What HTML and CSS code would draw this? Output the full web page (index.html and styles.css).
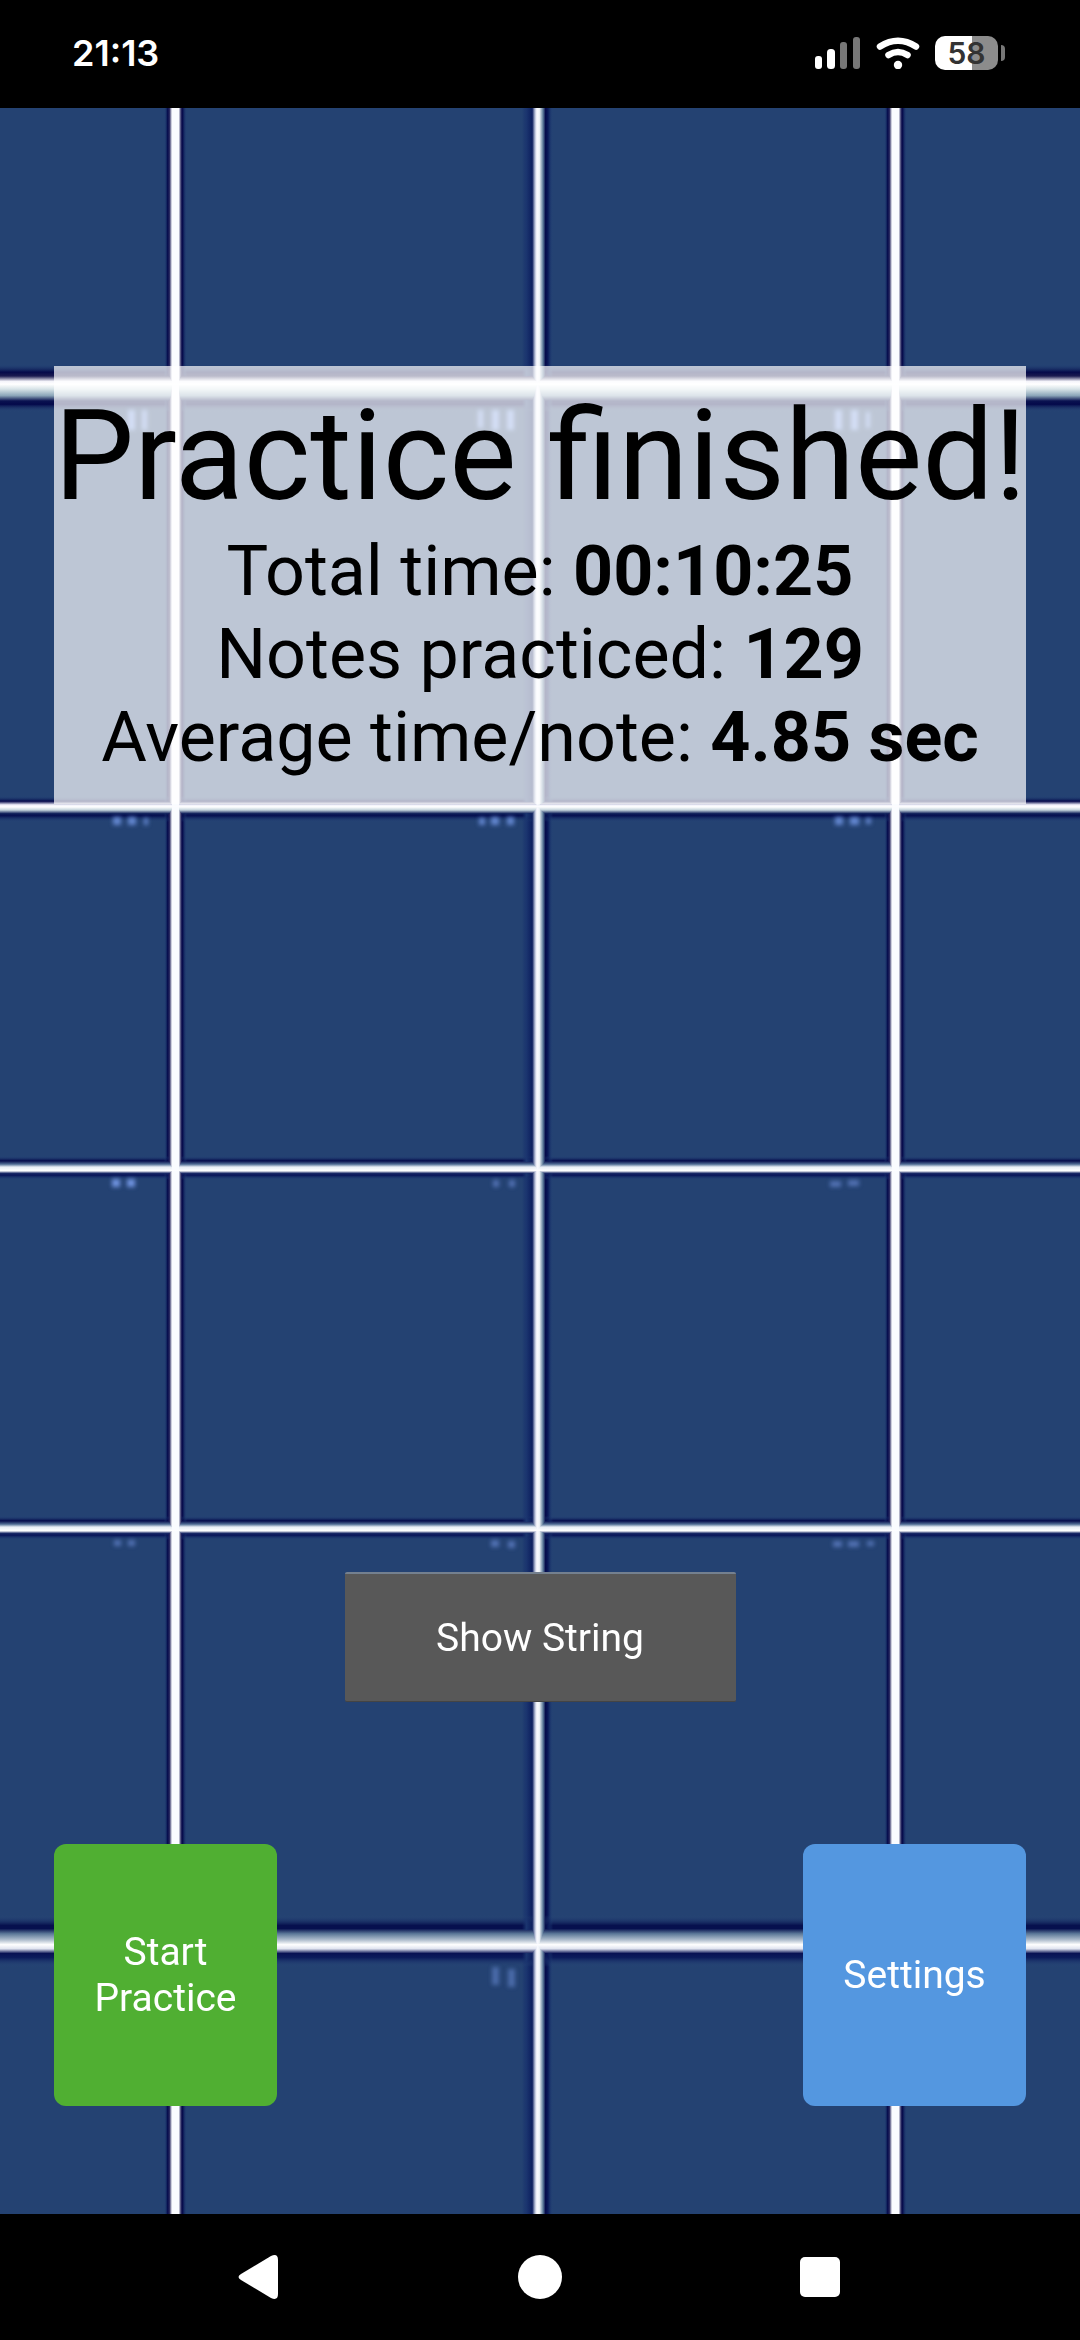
FILE: index.html
```html
<!DOCTYPE html>
<html lang="en">
<head>
<meta charset="utf-8">
<meta name="viewport" content="width=device-width, initial-scale=1">
<title>Practice finished</title>
<link rel="stylesheet" href="styles.css">
</head>
<body>
<header class="status">
  <time class="clock">21:13</time>
  <div class="indicators">
    <svg class="signal" viewBox="0 0 46 32" aria-hidden="true">
      <rect x="0" y="19" width="7" height="13" rx="3" fill="#fff"/>
      <rect x="12" y="12" width="8" height="20" rx="3.5" fill="#fff"/>
      <rect x="25" y="5" width="7" height="27" rx="3" fill="#777"/>
      <rect x="38" y="0" width="7" height="32" rx="3" fill="#777"/>
    </svg>
    <svg class="wifi" viewBox="0 0 44 32" aria-hidden="true" fill="none" stroke="#fff" stroke-width="6.5" stroke-linecap="round">
      <path d="M4 9.5Q22-2 40 9.5"/>
      <path d="M12.5 18Q22 12 31.500 18"/>
      <circle cx="22" cy="28" r="4.200" fill="#fff" stroke="none"/>
    </svg>
    <span class="battery"><span class="level">58</span><span class="tip"></span></span>
  </div>
</header>

<main class="stage">
  <svg class="board" viewBox="0 108 1080 2106" preserveAspectRatio="none" aria-hidden="true">
    <defs>
      <linearGradient id="edge">
        <stop offset="0" stop-color="#24457a" stop-opacity="0"/>
        <stop offset=".16" stop-color="#04094a"/>
        <stop offset=".24" stop-color="#2a2a60"/>
        <stop offset=".35" stop-color="#fafcff"/>
        <stop offset=".64" stop-color="#fafcff"/>
        <stop offset=".74" stop-color="#2a2a60"/>
        <stop offset=".81" stop-color="#04094a"/>
        <stop offset="1" stop-color="#24457a" stop-opacity="0"/>
      </linearGradient>
      <linearGradient id="middle">
        <stop offset="0" stop-color="#17306c" stop-opacity="0"/>
        <stop offset=".14" stop-color="#1b356f"/>
        <stop offset=".33" stop-color="#0c1e5e"/>
        <stop offset=".42" stop-color="#b8c0d8"/>
        <stop offset=".48" stop-color="#fafaff"/>
        <stop offset=".56" stop-color="#f0f4f8"/>
        <stop offset=".68" stop-color="#5a7898"/>
        <stop offset=".76" stop-color="#04094a"/>
        <stop offset=".84" stop-color="#0a1a5a"/>
        <stop offset="1" stop-color="#24457a" stop-opacity="0"/>
      </linearGradient>
      <linearGradient id="nut" x2="0" y2="1">
        <stop offset="0" stop-color="#24457a" stop-opacity="0"/>
        <stop offset=".17" stop-color="#04094a"/>
        <stop offset=".25" stop-color="#1a1a50"/>
        <stop offset=".36" stop-color="#f4f4fa"/>
        <stop offset=".42" stop-color="#fff"/>
        <stop offset=".52" stop-color="#d8e4e8"/>
        <stop offset=".66" stop-color="#8aa4b8"/>
        <stop offset=".77" stop-color="#0a1250"/>
        <stop offset=".84" stop-color="#04094a"/>
        <stop offset="1" stop-color="#2c4c7c" stop-opacity="0"/>
      </linearGradient>
      <linearGradient id="first" x2="0" y2="1">
        <stop offset="0" stop-color="#24457a" stop-opacity="0"/>
        <stop offset=".2" stop-color="#04094a"/>
        <stop offset=".34" stop-color="#f0f0fa"/>
        <stop offset=".42" stop-color="#fff"/>
        <stop offset=".54" stop-color="#c4d4dc"/>
        <stop offset=".68" stop-color="#0c1c58"/>
        <stop offset=".76" stop-color="#061050"/>
        <stop offset="1" stop-color="#24457a" stop-opacity="0"/>
      </linearGradient>
      <linearGradient id="fret" x2="0" y2="1">
        <stop offset="0" stop-color="#24457a" stop-opacity="0"/>
        <stop offset=".2" stop-color="#04094a"/>
        <stop offset=".34" stop-color="#4f6c94"/>
        <stop offset=".46" stop-color="#e8eef6"/>
        <stop offset=".62" stop-color="#fff"/>
        <stop offset=".72" stop-color="#1a2a68"/>
        <stop offset=".8" stop-color="#081458"/>
        <stop offset="1" stop-color="#24457a" stop-opacity="0"/>
      </linearGradient>
      <linearGradient id="last" x2="0" y2="1">
        <stop offset="0" stop-color="#2c4c7c" stop-opacity="0"/>
        <stop offset=".2" stop-color="#06104e"/>
        <stop offset=".26" stop-color="#06104e"/>
        <stop offset=".36" stop-color="#5c7898"/>
        <stop offset=".48" stop-color="#b0bece"/>
        <stop offset=".57" stop-color="#fff"/>
        <stop offset=".65" stop-color="#e0e4f0"/>
        <stop offset=".74" stop-color="#081254"/>
        <stop offset=".82" stop-color="#0c1c5c"/>
        <stop offset="1" stop-color="#2c4c7c" stop-opacity="0"/>
      </linearGradient>
      <filter id="soft" x="-50%" y="-50%" width="200%" height="200%"><feGaussianBlur stdDeviation="2"/></filter>
      <g id="frets">
        <rect x="0" y="364" width="1080" height="48" fill="url(#nut)"/>
        <rect x="0" y="796" width="1080" height="26" fill="url(#first)"/>
        <rect x="0" y="1156" width="1080" height="24" fill="url(#fret)"/>
        <rect x="0" y="1516" width="1080" height="24" fill="url(#fret)"/>
        <rect x="0" y="1915" width="1080" height="52" fill="url(#last)"/>
      </g>
    </defs>
    <rect y="108" width="1080" height="2106" fill="#24427a"/>
    <rect y="108" width="1080" height="2106" fill="#244272"/>
    <use href="#frets"/>
    <rect x="164" y="108" width="23" height="2106" fill="url(#edge)"/>
    <rect x="522" y="108" width="31" height="2106" fill="url(#middle)"/>
    <rect x="884" y="108" width="23" height="2106" fill="url(#edge)"/>
    <!-- second pass keeps the bright frets unbroken where the strings cross -->
    <use class="crossing" href="#frets"/>
    <g fill="#6f93e0" filter="url(#soft)">
      <path d="M128 410h7v20h-7zM142 410h5v20h-5zM478 410h5v18h-5zM492 410h7v20h-7zM507 410h7v20h-7zM835 410h7v20h-7zM851 410h7v20h-7zM866 412h4v16h-4z"/>
      <path d="M113 817h8v8h-8zM128 817h8v8h-8zM144 818h4v7h-4zM479 818h6v7h-6zM491 817h8v8h-8zM507 817h7v8h-7zM835 817h8v8h-8zM850 817h9v8h-9zM866 818h5v6h-5z" opacity=".85"/>
      <path d="M112 1179h8v8h-8zM127 1179h8v8h-8z"/>
      <path d="M493 1180h6v7h-6zM509 1180h6v7h-6zM830 1181h11v6h-11zM848 1180h11v6h-11z" opacity=".6"/>
      <path d="M114 1540h7v6h-7zM128 1540h7v6h-7zM491 1540h8v7h-8zM508 1541h7v7h-7zM833 1541h9v6h-9zM848 1541h11v6h-11zM867 1541h7v5h-7z" opacity=".6"/>
      <path d="M492 1967h7v18h-7zM508 1969h7v18h-7z" opacity=".5"/>
    </g>
  </svg>

  <section class="summary">
    <h1 class="title">Practice finished!</h1>
    <p class="stat">Total time: <b>00:10:25</b></p>
    <p class="stat">Notes practiced: <b>129</b></p>
    <p class="stat">Average time/note: <b>4.85 sec</b></p>
  </section>

  <div class="controls">
    <button class="reveal" type="button">Show String</button>
    <div class="actions">
      <button class="action start" type="button">Start Practice</button>
      <button class="action settings" type="button">Settings</button>
    </div>
  </div>
</main>

<nav class="system">
  <button class="key" type="button" aria-label="Back"><svg viewBox="0 0 48 48"><path d="M5 21 35 3Q42 0 42 7V41Q42 48 35 45L5 27Q0 24 5 21Z"/></svg></button>
  <button class="key" type="button" aria-label="Home"><svg viewBox="0 0 48 48"><circle cx="24" cy="24" r="22"/></svg></button>
  <button class="key" type="button" aria-label="Recent apps"><svg viewBox="0 0 48 48"><rect x="4" y="4" width="40" height="40" rx="5"/></svg></button>
</nav>
</body>
</html>
```
FILE: styles.css
```css
* {
  box-sizing: border-box;
}

body {
  margin: 0;
  min-height: 100vh;
  display: flex;
  flex-direction: column;
  background: #000;
  color: #000;
  font-family: Roboto, "Noto Sans", sans-serif;
}

button {
  border: 0;
  padding: 0;
  font: inherit;
  color: #fff;
}

.status {
  height: 108px;
  padding: 0 75px 2px 72px;
  display: flex;
  align-items: center;
  justify-content: space-between;
  color: #fff;
}

.clock {
  font-family: Inter, sans-serif;
  font-size: 36px;
  font-weight: 600;
}

.indicators {
  display: flex;
  align-items: center;
  gap: 15px;
}

.signal {
  width: 46px;
  height: 32px;
}

.wifi {
  width: 44px;
  height: 32px;
}

.battery {
  display: flex;
  align-items: center;
  gap: 3px;
}

.level {
  width: 63px;
  height: 34px;
  border-radius: 10px;
  background: linear-gradient(90deg, #fff 59%, #8c8c8c 59%);
  color: #333;
  font-family: Inter, sans-serif;
  font-size: 30px;
  font-weight: 600;
  line-height: 34px;
  text-align: center;
}

.tip {
  width: 4px;
  height: 16px;
  border-radius: 0 4px 4px 0;
  background: #777;
}

.stage {
  flex: 1;
  position: relative;
  isolation: isolate;
  display: flex;
  flex-direction: column;
  justify-content: space-between;
  padding: 258px 54px 108px;
}

.board {
  position: absolute;
  inset: 0;
  z-index: -1;
  width: 100%;
  height: 100%;
}

.crossing {
  mix-blend-mode: lighten;
}

.summary {
  padding: 16px 0 25px;
  background: rgba(255, 255, 255, 0.7);
  text-align: center;
}

.title {
  margin: 0;
  font-size: 127px;
  font-weight: 400;
  line-height: 148px;
  white-space: nowrap;
}

.stat {
  margin: 0;
  font-size: 70px;
  line-height: 83px;
}

.controls {
  display: flex;
  flex-direction: column;
  gap: 142px;
  font-size: 39px;
  line-height: 46px;
}

.reveal {
  align-self: center;
  width: 391px;
  height: 130px;
  border-top: 2px solid #74808f;
  border-bottom: 1px solid #444;
  border-radius: 2px;
  background: #585858;
}

.actions {
  display: flex;
  justify-content: space-between;
}

.action {
  width: 223px;
  height: 262px;
  padding: 0 24px;
  border-radius: 12px;
}

.start {
  background: #50af32;
}

.settings {
  background: #5497e0;
}

.system {
  height: 126px;
  padding: 0 236px;
  display: flex;
  align-items: center;
  justify-content: space-between;
}

.key {
  width: 48px;
  height: 48px;
  background: none;
}

.key svg {
  display: block;
  width: 48px;
  height: 48px;
  fill: #fff;
}
```
